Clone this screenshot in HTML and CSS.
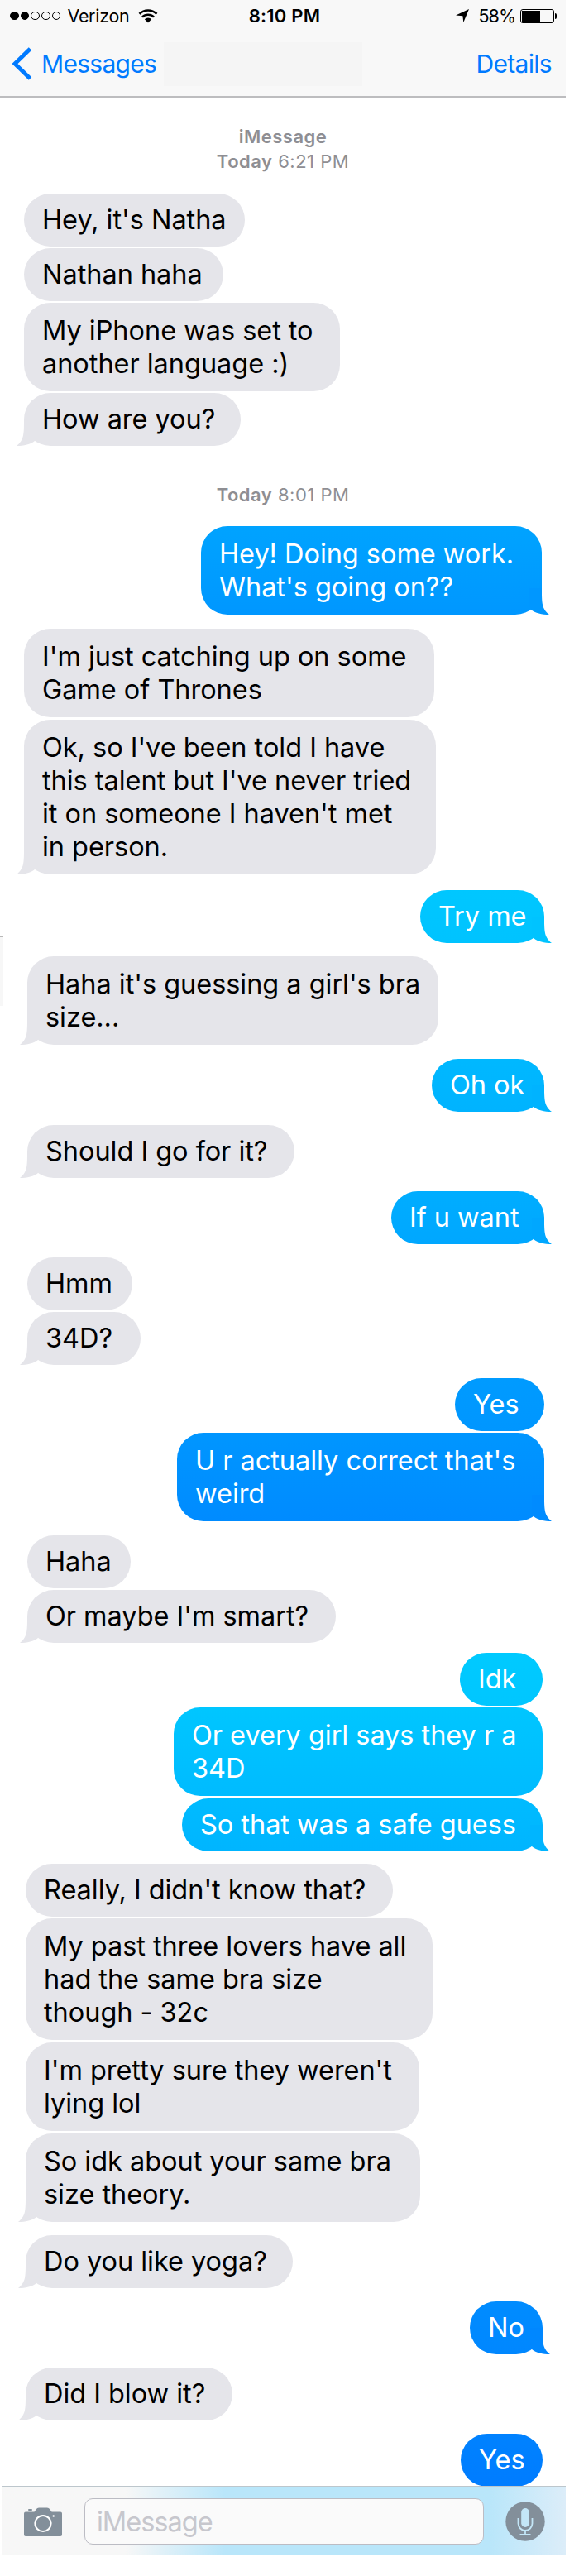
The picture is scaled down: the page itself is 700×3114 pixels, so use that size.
FILE: index.html
```html
<!DOCTYPE html>
<html lang="en">
<head>
    <meta charset="UTF-8">
    <title>Messages</title>
    <link rel="stylesheet" href="styles.css">
</head>
<body>
    <div class="phone">
        <header class="top">
            <div class="status">
                <div class="status-left">
                    <div class="signal"><i class="on"></i><i class="on"></i><i></i><i></i><i></i></div>
                    <span class="carrier">Verizon</span>
                    <svg class="wifi" viewBox="0 0 24 17" width="24" height="17">
                        <path d="M1.500 5.800a15 15 0 0 1 21 0M5 9.600a10 10 0 0 1 14 0" fill="none" stroke="#000" stroke-width="2.700"/>
                        <path d="M12 16.600l-4.200-4.300a6 6 0 0 1 8.400 0z"/>
                    </svg>
                </div>
                <span class="clock">8:10 PM</span>
                <div class="status-right">
                    <svg class="location" viewBox="0 0 16 16" width="16" height="16">
                        <path d="M16 0L9.300 16 8.400 8.200 0 7.600z"/>
                    </svg>
                    <span class="percent">58%</span>
                    <div class="battery"><i></i></div>
                </div>
            </div>
            <nav class="nav">
                <svg class="chevron" viewBox="0 0 24 40" width="24" height="40">
                    <path d="M21.500 2L3 20l18.500 18" fill="none" stroke="#007aff" stroke-width="5"/>
                </svg>
                <a class="back">Messages</a>
                <div class="contact"></div>
                <a class="details">Details</a>
            </nav>
        </header>

        <section class="shot first">
            <div class="stamp"><b>iMessage</b><br><b>Today</b> 6:21 PM</div>
            <div class="group them">
                <div class="msg" id="m1">Hey, it's Natha</div>
                <div class="msg" id="m2">Nathan haha</div>
                <div class="msg long" id="m3">My iPhone was set to<br>another language :)</div>
                <div class="msg tail" id="m4">How are you?</div>
            </div>
            <div class="stamp later"><b>Today</b> 8:01 PM</div>
            <div class="group me">
                <div class="msg long tail" id="m5">Hey! Doing some work.<br>What's going on??</div>
            </div>
            <div class="group them">
                <div class="msg long" id="m6">I'm just catching up on some<br>Game of Thrones</div>
                <div class="msg long tail" id="m7">Ok, so I've been told I have<br>this talent but I've never tried<br>it on someone I haven't met<br>in person.</div>
            </div>
        </section>

        <section class="shot second">
            <div class="sliver"></div>
            <div class="group me">
                <div class="msg tail" id="m8">Try me</div>
            </div>
            <div class="group them">
                <div class="msg long tail" id="m9">Haha it's guessing a girl's bra<br>size...</div>
            </div>
            <div class="group me">
                <div class="msg tail" id="m10">Oh ok</div>
            </div>
            <div class="group them">
                <div class="msg tail" id="m11">Should I go for it?</div>
            </div>
            <div class="group me">
                <div class="msg tail" id="m12">If u want</div>
            </div>
            <div class="group them">
                <div class="msg" id="m13">Hmm</div>
                <div class="msg tail" id="m14">34D?</div>
            </div>
            <div class="group me">
                <div class="msg" id="m15">Yes</div>
                <div class="msg long tail" id="m16">U r actually correct that's<br>weird</div>
            </div>
            <div class="group them">
                <div class="msg" id="m17">Haha</div>
                <div class="msg tail" id="m18">Or maybe I'm smart?</div>
            </div>
        </section>

        <section class="shot third">
            <div class="group me">
                <div class="msg" id="m19">Idk</div>
                <div class="msg long" id="m20">Or every girl says they r a<br>34D</div>
                <div class="msg tail" id="m21">So that was a safe guess</div>
            </div>
            <div class="group them">
                <div class="msg" id="m22">Really, I didn't know that?</div>
                <div class="msg long" id="m23">My past three lovers have all<br>had the same bra size<br>though - 32c</div>
                <div class="msg long" id="m24">I'm pretty sure they weren't<br>lying lol</div>
                <div class="msg long tail" id="m25">So idk about your same bra<br>size theory.</div>
            </div>
            <div class="group them">
                <div class="msg tail" id="m26">Do you like yoga?</div>
            </div>
            <div class="group me">
                <div class="msg tail" id="m27">No</div>
            </div>
            <div class="group them">
                <div class="msg tail" id="m28">Did I blow it?</div>
            </div>
            <div class="group me">
                <div class="msg" id="m29">Yes</div>
            </div>
        </section>

        <footer class="compose">
            <svg class="camera" viewBox="0 0 46 35" width="46" height="35">
                <rect x="5" y="2" width="5" height="2" rx="1" fill="#838f9a"/>
                <path d="M2 5.500h10.500l2.500-3.500q1-1.500 3-1.500h10q2 0 3 1.500l2.500 3.500H44q2 0 2 2V33q0 2-2 2H2q-2 0-2-2V7.500q0-2 2-2z" fill="#838f9a"/>
                <circle cx="23" cy="19.500" r="9.600" fill="none" stroke="#fff" stroke-width="2"/>
                <circle cx="35.700" cy="10.500" r="1.200" fill="#fff"/>
            </svg>
            <div class="field">iMessage</div>
            <svg class="mic" viewBox="0 0 48 48" width="48" height="48">
                <circle cx="24" cy="24" r="23.700" fill="#838f9a"/>
                <rect x="19.200" y="8" width="9.600" height="23" rx="4.800" fill="#c3e6f7"/>
                <path d="M15.500 20v6.500a8.500 8.500 0 0 0 17 0V20M24 35v5M17.500 40h13" fill="none" stroke="#c3e6f7" stroke-width="1.800"/>
            </svg>
        </footer>
    </div>
</body>
</html>
```

FILE: styles.css
```css
body {
    margin: 0;
    background: white;
    font-family: Inter, "Liberation Sans", sans-serif;
    color: #000;
}
.phone {
    width: 684px;
    height: 3114px;
    overflow: hidden;
}

/* status bar + nav */
.top {
    height: 116px;
    background: #f8f8f8;
    border-bottom: 2px solid #bdbdbf;
}
.status {
    display: grid;
    grid-template-columns: 1fr auto 1fr;
    align-items: center;
    height: 38px;
    padding: 0 10px 0 12px;
    font-size: 21.5px;
    line-height: 38px;
}
.status-left, .status-right {
    display: flex;
    align-items: center;
}
.status-right {
    justify-content: flex-end;
}
.signal {
    display: flex;
    gap: 2px;
    margin-right: 8px;
}
.signal i {
    box-sizing: border-box;
    width: 10.7px;
    height: 10.7px;
    border: 1px solid #000;
    border-radius: 50%;
}
.signal .on {
    background: #000;
}
.carrier {
    letter-spacing: -0.3px;
    margin-right: 11px;
}
.wifi, .location {
    display: block;
}
.clock {
    font-size: 22px;
    font-weight: 600;
    letter-spacing: 0.2px;
    margin-left: 2px;
}
.location {
    margin-right: 12px;
}
.percent {
    letter-spacing: -1px;
    margin-right: 6px;
}
.battery {
    position: relative;
    box-sizing: border-box;
    width: 41px;
    height: 17px;
    padding: 1px;
    margin-right: 4px;
    border: 1px solid #000;
    border-radius: 3px;
}
.battery i {
    display: block;
    width: 22px;
    height: 13px;
    background: #000;
}
.battery::after {
    content: "";
    position: absolute;
    right: -4px;
    top: 4px;
    width: 2px;
    height: 7px;
    border-radius: 0 2px 2px 0;
    background: #000;
}
.nav {
    display: flex;
    align-items: center;
    height: 78px;
    padding: 0 17px 0 15px;
    color: #007aff;
    font-size: 30px;
    letter-spacing: -0.7px;
}
.back {
    width: 148px;
    margin-left: 11px;
}
.contact {
    width: 240px;
    height: 53px;
    background: #f5f5f5;
}
.details {
    margin-left: auto;
}

/* conversation */
.stamp {
    height: 84px;
    padding-top: 32px;
    color: #8e8e93;
    font-size: 22px;
    line-height: 30px;
    letter-spacing: 0.5px;
    text-align: center;
}
.stamp b {
    font-weight: 600;
}
.stamp.later {
    height: 53px;
    padding-top: 44px;
}
.group {
    display: flex;
    flex-direction: column;
    gap: 2px;
    margin-top: 16px;
}
.them {
    align-items: flex-start;
}
.me {
    align-items: flex-end;
}
.stamp + .group {
    margin-top: 0;
}
.msg {
    position: relative;
    box-sizing: border-box;
    height: 64px;
    padding: 12px 0 0 22px;
    border-radius: 32px;
    background: #e5e5ea;
    font-size: 32.5px;
    line-height: 40px;
    letter-spacing: -0.04px;
    white-space: nowrap;
}
.long {
    height: auto;
    padding: 13.5px 0 13.5px 22px;
    margin-bottom: 1px;
}
.me .msg {
    color: white;
    background: linear-gradient(var(--from), var(--to));
}
.tail::after {
    content: "";
    position: absolute;
    left: -9px;
    bottom: 0;
    width: 26px;
    height: 32px;
    background: #e5e5ea;
    clip-path: path("M9 0C9 18 9 25 0 32C9 32 17 30 22 26L24 20L24 0Z");
}
.me .tail::after {
    left: auto;
    right: -9px;
    background: var(--to);
    transform: scaleX(-1);
}

/* the three parts of the thread sit a few pixels apart */
.first {
    padding: 0 29px;
}
.second {
    position: relative;
    padding: 2px 26px 0 33px;
}
.third {
    padding: 0 28px 0 31px;
}
.third .group:first-child {
    margin-top: 12px;
}
.third .group:nth-child(2), .third .group:nth-child(3) {
    margin-top: 15px;
}
.sliver {
    position: absolute;
    left: 0;
    top: 74px;
    width: 4px;
    height: 83px;
    background: #f7f7f7;
    border-top: 1px solid #b8b8b8;
}

#m1 { width: 267px; }
#m2 { width: 241px; }
#m3 { width: 382px; margin-bottom: 0; }
#m4 { width: 262px; }
#m5 { width: 412px; --from: #00a3ff; --to: #0097ff; }
#m6 { width: 496px; }
#m7 { width: 498px; }
#m8 { width: 150px; --from: #00c7ff; --to: #00c3ff; }
#m9 { width: 497px; }
#m10 { width: 136px; --from: #00b8ff; --to: #00b3ff; }
#m11 { width: 323px; }
#m12 { width: 185px; --from: #00adff; --to: #00a7ff; }
#m13 { width: 127px; }
#m14 { width: 137px; }
#m15 { width: 108px; --from: #009bff; --to: #0096ff; }
#m16 { width: 444px; --from: #0096ff; --to: #008bff; }
#m17 { width: 125px; }
#m18 { width: 373px; }
#m19 { width: 100px; --from: #00caff; --to: #00c6ff; }
#m20 { width: 446px; --from: #00c6ff; --to: #00bbff; }
#m21 { width: 436px; --from: #00bbff; --to: #00b5ff; }
#m22 { width: 444px; }
#m23 { width: 492px; }
#m24 { width: 476px; }
#m25 { width: 477px; }
#m26 { width: 323px; }
#m27 { width: 88px; --from: #008cff; --to: #0087ff; }
#m28 { width: 250px; }
#m29 { width: 99px; --from: #0082ff; --to: #007cff; }

/* compose bar */
.compose {
    position: relative;
    box-sizing: border-box;
    display: flex;
    align-items: center;
    height: 84px;
    margin: -1px 0 0 2px;
    padding: 0 25px 0 27px;
    border-top: 2px solid #bcc6cc;
    background: linear-gradient(to right, #f7f7f7 150px, #b9e6fa 270px, #b9e6fa 590px, #dcedf9 682px);
}
.field {
    box-sizing: border-box;
    width: 483px;
    height: 56px;
    margin: 0 auto 0 27px;
    padding-left: 14px;
    border: 1px solid #bcbcc4;
    border-radius: 10px;
    background: #fafafa;
    color: #c7c7cd;
    font-size: 32.5px;
    line-height: 55px;
    letter-spacing: -1px;
}
```
